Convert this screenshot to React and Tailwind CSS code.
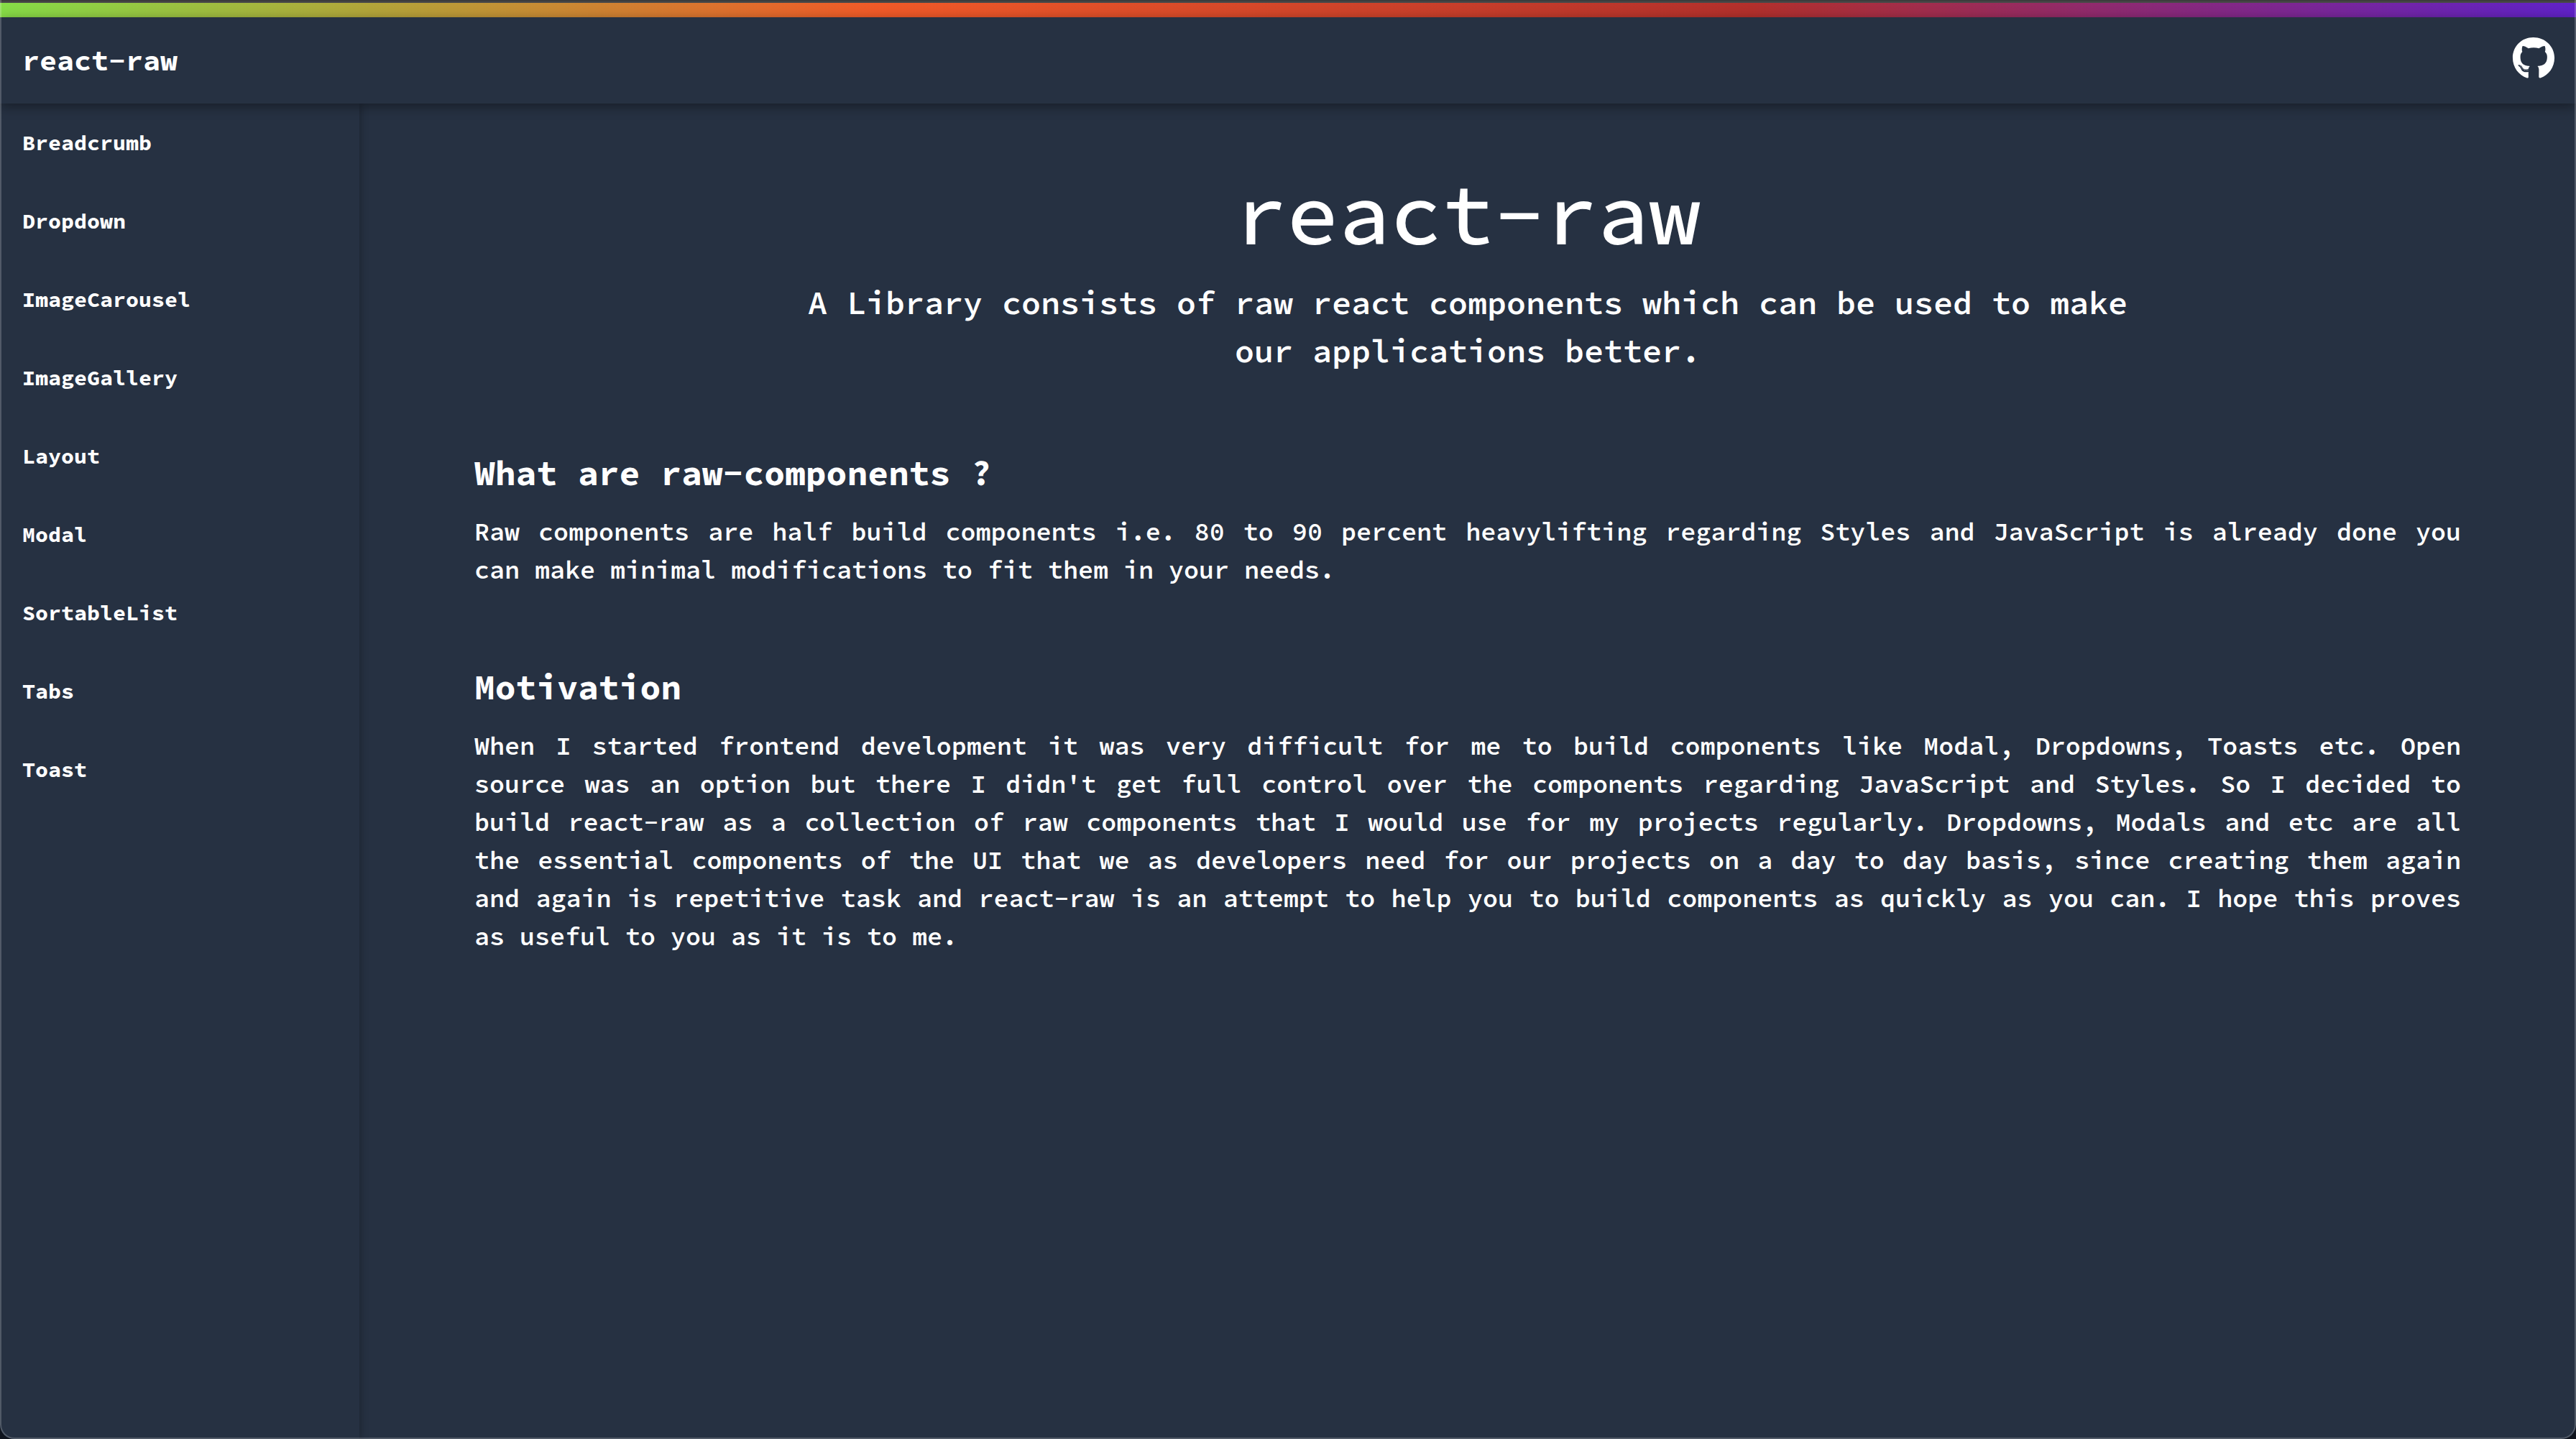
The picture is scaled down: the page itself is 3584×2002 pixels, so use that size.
import { FaGithub } from "react-icons/fa";

const components = [
  "Breadcrumb",
  "Dropdown",
  "ImageCarousel",
  "ImageGallery",
  "Layout",
  "Modal",
  "SortableList",
  "Tabs",
  "Toast",
];

const sections = [
  {
    title: "What are raw-components ?",
    body: "Raw components are half build components i.e. 80 to 90 percent heavylifting regarding Styles and JavaScript is already done you can\u00a0make minimal modifications to fit them in your needs.",
  },
  {
    title: "Motivation",
    body: "When I started frontend development it was very difficult for me to build components like Modal, Dropdowns, Toasts etc. Open source\u00a0was an option but there I didn't get full control over the components regarding JavaScript and Styles. So I decided to build\u00a0react-raw as a collection of raw components that I would use for my projects regularly. Dropdowns, Modals and etc are all the\u00a0essential components of the UI that we as developers need for our projects on a day to day basis, since creating them again and\u00a0again is repetitive task and react-raw is an attempt to help you to build components as quickly as you can. I hope this proves as useful to you as it is to me.",
  },
];

function Header() {
  return (
    <header className="relative z-20 flex h-[120px] items-center justify-between bg-[#263142] pr-[29px] pl-[31px] shadow-[0_4px_16px_rgba(0,0,0,0.4)]">
      <a href="#home" className="text-[40px] leading-[60px] font-bold">
        react-raw
      </a>
      <a href="#github" aria-label="GitHub repository" className="pb-1.5">
        <FaGithub className="size-[60px]" />
      </a>
    </header>
  );
}

function Sidebar() {
  return (
    <nav className="relative z-10 w-[500px] shrink-0 bg-[#263142] shadow-[2px_0_10px_rgba(0,0,0,0.25)]">
      <ul>
        {components.map((name) => (
          <li key={name}>
            <a
              href={`#${name}`}
              className="flex h-[109px] items-center px-[31px] text-[30px] font-bold"
            >
              {name}
            </a>
          </li>
        ))}
      </ul>
    </nav>
  );
}

export default function App() {
  return (
    <div className="min-h-screen bg-[#0f141e] font-['Source_Code_Pro','Liberation_Mono',monospace] text-white">
      <div className="relative flex min-h-screen flex-col overflow-hidden rounded-b-[20px] bg-[#263142]">
        <div className="h-1 border-b-2 border-[#484848] bg-[#3d3d3d]" />
        <div className="h-5 bg-[linear-gradient(to_right,#86dc47,#f05a28_34%,#b2302c_68%,#6022c8)]" />
        <Header />
        <div className="flex grow">
          <Sidebar />
          <main className="flex min-w-0 grow flex-col gap-[100px] px-40 pt-[82px] font-semibold">
            <div className="flex flex-col items-center gap-[18px] text-center">
              <h1 className="text-[120px] leading-[144px] font-medium">
                react-raw
              </h1>
              <p className="max-w-[1900px] text-[45px] leading-[67px]">
                A Library consists of raw react components which can be used to
                make our applications better.
              </p>
            </div>
            {sections.map(({ title, body }) => (
              <section key={title} className="flex flex-col gap-5">
                <h2 className="text-[48px] leading-[72px] font-bold">
                  {title}
                </h2>
                <p className="text-justify text-[35px] leading-[53px]">{body}</p>
              </section>
            ))}
          </main>
        </div>
        <div className="pointer-events-none absolute inset-0 z-30 rounded-b-[20px] border-x-2 border-b-2 border-white/20" />
      </div>
    </div>
  );
}
